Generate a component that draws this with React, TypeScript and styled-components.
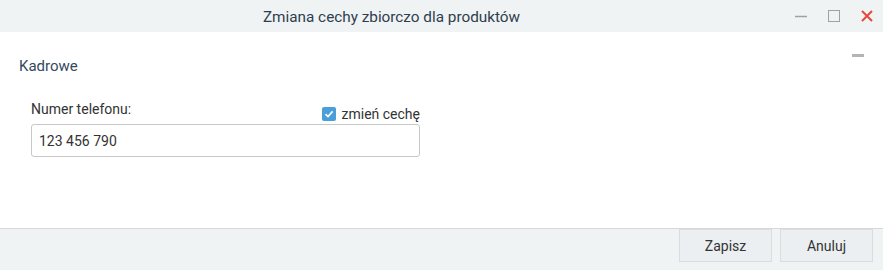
import React from "react";
import styled, { createGlobalStyle } from "styled-components";

const Global = createGlobalStyle`
  html, body { margin: 0; padding: 0; background: #ffffff; }
  body { font-family: Roboto, "Noto Sans", sans-serif; }
  * { box-sizing: border-box; }
`;

const Window = styled.div`
  width: 883px;
  height: 270px;
  display: flex;
  flex-direction: column;
  background: #ffffff;
`;

const TitleBar = styled.div`
  height: 32px;
  flex: none;
  display: flex;
  align-items: center;
  background: #eff3f4;
`;

const Title = styled.div`
  flex: 1;
  text-align: center;
  font-size: 15.3px;
  color: #2f3e4e;
  padding-top: 1px;
`;

const WinButtons = styled.div`
  width: 100px;
  display: flex;
  align-items: center;
  justify-content: flex-end;
  gap: 21px;
  padding-right: 10px;
`;

const WinBtn = styled.span`
  width: 12px;
  height: 12px;
  display: flex;
  align-items: center;
  justify-content: center;
`;

const Body = styled.div`
  flex: 1;
  display: flex;
  flex-direction: column;
  padding: 17px 19px 0 19px;
`;

const SectionHeader = styled.div`
  display: flex;
  justify-content: space-between;
  align-items: flex-start;
`;

const SectionTitle = styled.div`
  font-size: 15px;
  font-weight: 400;
  color: #34495e;
  margin-top: 8px;
`;

const Collapse = styled.div`
  width: 12px;
  height: 3px;
  background: #b4b4b4;
  margin-top: 5px;
`;

const Field = styled.div`
  width: 389px;
  margin: 25px 0 0 12px;
  display: flex;
  flex-direction: column;
`;

const FieldHead = styled.div`
  display: flex;
  justify-content: space-between;
  align-items: flex-end;
  height: 24px;
`;

const Label = styled.div`
  font-size: 14px;
  color: #333;
  margin-bottom: 7px;
`;

const CheckWrap = styled.label`
  display: flex;
  align-items: center;
  gap: 6px;
  font-size: 14px;
  color: #333;
  margin-bottom: 2px;
`;

const Box = styled.span`
  width: 14px;
  height: 14px;
  border-radius: 2px;
  background: #4a9fdb;
  display: flex;
  align-items: center;
  justify-content: center;
`;

const Input = styled.div`
  height: 33px;
  border: 1px solid #c8c8c8;
  border-radius: 3px;
  display: flex;
  align-items: center;
  padding-left: 7px;
  font-size: 14px;
  color: #333;
`;

const Footer = styled.div`
  height: 42px;
  flex: none;
  border-top: 1px solid #d5d9da;
  background: #eff3f4;
  display: flex;
  align-items: flex-start;
  justify-content: flex-end;
  gap: 8px;
  padding: 0 10px 0 0;
`;

const Button = styled.div`
  width: 93px;
  height: 33px;
  background: #eceff1;
  border: 1px solid #dadddf;
  display: flex;
  align-items: center;
  justify-content: center;
  font-size: 14px;
  color: #333;
`;

export default function App() {
  return (
    <>
      <Global />
      <Window>
        <TitleBar>
          <Title>Zmiana cechy zbiorczo dla produktów</Title>
          <WinButtons>
            <WinBtn>
              <svg width="12" height="12" viewBox="0 0 12 12">
                <line x1="0" y1="6.5" x2="12" y2="6.5" stroke="#9aa3a6" strokeWidth="1.5" />
              </svg>
            </WinBtn>
            <WinBtn>
              <svg width="12" height="12" viewBox="0 0 12 12">
                <rect x="0.5" y="0.5" width="11" height="11" fill="none" stroke="#9aa3a6" strokeWidth="1" />
              </svg>
            </WinBtn>
            <WinBtn>
              <svg width="12" height="12" viewBox="0 0 12 12">
                <path d="M1 1 L11 11 M11 1 L1 11" stroke="#e8473b" strokeWidth="2" />
              </svg>
            </WinBtn>
          </WinButtons>
        </TitleBar>
        <Body>
          <SectionHeader>
            <SectionTitle>Kadrowe</SectionTitle>
            <Collapse />
          </SectionHeader>
          <Field>
            <FieldHead>
              <Label>Numer telefonu:</Label>
              <CheckWrap>
                <Box>
                  <svg width="10" height="10" viewBox="0 0 10 10">
                    <path d="M1.5 5.2 L4 7.6 L8.6 2.4" fill="none" stroke="#fff" strokeWidth="1.6" />
                  </svg>
                </Box>
                zmień cechę
              </CheckWrap>
            </FieldHead>
            <Input>123 456 790</Input>
          </Field>
        </Body>
        <Footer>
          <Button>Zapisz</Button>
          <Button>Anuluj</Button>
        </Footer>
      </Window>
    </>
  );
}
